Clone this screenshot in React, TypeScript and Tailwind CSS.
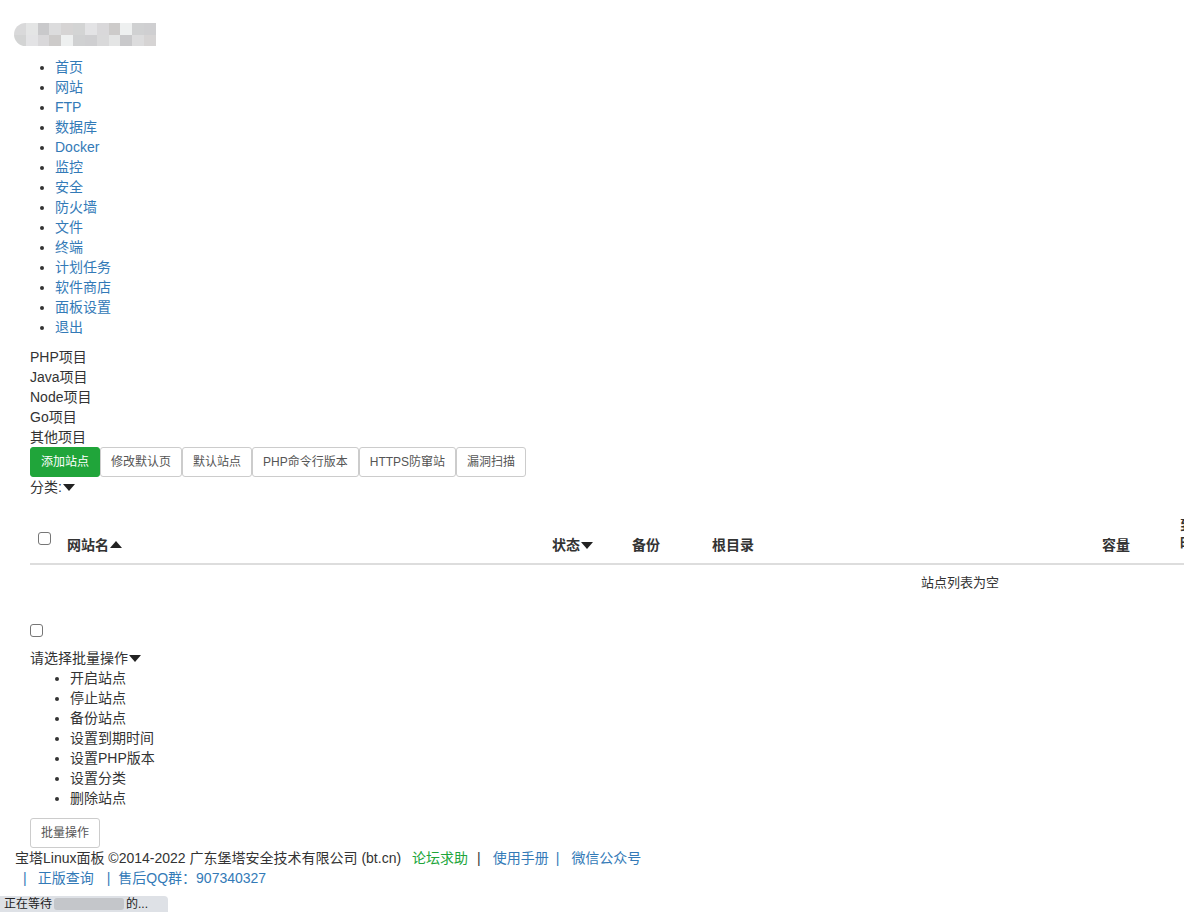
import React from "react";

const nav = ["首页", "网站", "FTP", "数据库", "Docker", "监控", "安全", "防火墙", "文件", "终端", "计划任务", "软件商店", "面板设置", "退出"];
const projects = ["PHP项目", "Java项目", "Node项目", "Go项目", "其他项目"];
const tools = ["修改默认页", "默认站点", "PHP命令行版本", "HTTPS防窜站", "漏洞扫描"];
const batch = ["开启站点", "停止站点", "备份站点", "设置到期时间", "设置PHP版本", "设置分类", "删除站点"];

const logoShades = ["#d9d9da", "#e4e5e5", "#c9c9cb", "#dcdcdd", "#d6d4d4", "#d3d4d4", "#e3e3e5", "#d9d8da", "#cdcbca", "#eef0f0", "#d0d1d2", "#cfcfd1"];

const Down = () => (
  <span className="inline-block w-0 h-0 border-x-[6px] border-x-transparent border-t-[7px] border-t-[#222] align-middle ml-[1px] mb-[2px]" />
);
const Up = () => (
  <span className="inline-block w-0 h-0 border-x-[6px] border-x-transparent border-b-[7px] border-b-[#222] align-middle ml-[1px] mb-[3px]" />
);

export default function App() {
  return (
    <div className="w-[1184px] h-[912px] overflow-hidden bg-white text-[14px] leading-[20px] text-[#333] font-['Liberation_Sans','Noto_Sans_CJK_SC',sans-serif] relative">
      {/* blurred logo */}
      <div className="pt-[23px] pl-[14px]">
        <div className="flex w-[142px] h-[23px] rounded-l-full overflow-hidden">
          {logoShades.map((c, i) => (
            <div key={i} className="flex-1 flex flex-col">
              <div className="flex-1" style={{ backgroundColor: c }} />
              <div className="flex-1" style={{ backgroundColor: logoShades[(i + 5) % logoShades.length] }} />
            </div>
          ))}
        </div>
      </div>

      {/* main nav */}
      <ul className="list-disc pl-[55px] mt-[11px] marker:text-[#333]">
        {nav.map((n) => (
          <li key={n} className="text-[#337ab7]">
            <span>{n}</span>
          </li>
        ))}
      </ul>

      <div className="pl-[30px] mt-[10px]">
        {projects.map((p) => (
          <div key={p}>{p}</div>
        ))}

        <div className="flex">
          <button className="h-[30px] px-[10px] text-[12px] text-white bg-[#20a53a] border border-[#20a53a] rounded-[3px]">添加站点</button>
          {tools.map((t) => (
            <button key={t} className="h-[30px] px-[10px] text-[12px] text-[#555] bg-white border border-[#ccc] rounded-[3px]">
              {t}
            </button>
          ))}
        </div>
        <div>
          分类:<Down />
        </div>
      </div>

      {/* table */}
      <div className="pl-[30px] mt-[7px]">
        <table className="w-[1860px] border-collapse table-fixed">
          <thead>
            <tr className="border-b-2 border-[#ddd]">
              <th className="w-[29px] align-top pt-[28px] pl-[8px] text-left">
                <span className="block w-[13px] h-[13px] border border-[#767676] rounded-[3px]" />
              </th>
              <th className="w-[485px] align-bottom px-[8px] pb-[8px] text-left font-bold text-[14px]">
                网站名<Up />
              </th>
              <th className="w-[80px] align-bottom px-[8px] pb-[8px] text-left font-bold">
                状态<Down />
              </th>
              <th className="w-[80px] align-bottom px-[8px] pb-[8px] text-left font-bold">备份</th>
              <th className="w-[390px] align-bottom px-[8px] pb-[8px] text-left font-bold">根目录</th>
              <th className="w-[78px] align-bottom px-[8px] pb-[8px] text-left font-bold">容量</th>
              <th className="w-[40px] align-bottom pl-[8px] pr-[4px] pt-[12px] pb-[11px] text-left font-bold leading-[18px]">
                到期 时间
              </th>
              <th className="align-bottom px-[8px] pb-[8px] text-left font-bold">PHP</th>
            </tr>
          </thead>
          <tbody>
            <tr>
              <td colSpan={8} className="text-center py-[8px] text-[13px]">站点列表为空</td>
            </tr>
          </tbody>
        </table>
      </div>

      {/* batch */}
      <div className="pl-[30px] mt-[23px]">
        <span className="block w-[13px] h-[13px] border border-[#767676] rounded-[3px]" />
        <div className="mt-[11px]">
          请选择批量操作<Down />
        </div>
        <ul className="list-disc pl-[40px] marker:text-[#333]">
          {batch.map((b) => (
            <li key={b}>{b}</li>
          ))}
        </ul>
        <button className="mt-[10px] h-[30px] px-[10px] text-[12px] text-[#555] bg-white border border-[#ccc] rounded-[3px]">批量操作</button>
      </div>

      {/* footer */}
      <div className="pl-[15px] text-[14px]">
        <div>
          宝塔Linux面板 ©2014-2022 广东堡塔安全技术有限公司 (bt.cn)
          <span className="ml-[11px] text-[#20a53a]">论坛求助</span>
          <span className="ml-[9px] mr-[12px]">|</span>
          <span className="text-[#337ab7]">使用手册</span>
          <span className="ml-[7px] mr-[12px] text-[#337ab7]">|</span>
          <span className="text-[#337ab7]">微信公众号</span>
        </div>
        <div className="text-[#337ab7]">
          <span className="ml-[8px] mr-[11px]">|</span>
          <span>正版查询</span>
          <span className="ml-[13px] mr-[8px]">|</span>
          <span>售后QQ群：907340327</span>
        </div>
      </div>

      {/* status bar */}
      <div className="absolute left-0 bottom-0 h-[16px] w-[168px] bg-[#dee1e6] rounded-tr-[4px] text-[12px] leading-[16px] text-[#222] pl-[4px] flex items-center">
        正在等待
        <span className="inline-block w-[70px] h-[12px] mx-[2px] bg-[#c4c6ca] rounded-[3px]" />
        的...
      </div>
    </div>
  );
}
